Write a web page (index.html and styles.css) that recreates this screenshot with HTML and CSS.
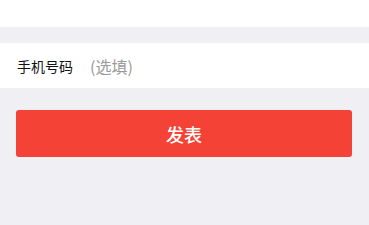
FILE: index.html
```html
<!DOCTYPE html>
<html lang="zh-CN">

<head>
    <meta charset="UTF-8">
    <meta name="viewport" content="width=device-width, initial-scale=1.0">
    <title>发表</title>
    <link rel="stylesheet" href="styles.css">
</head>

<body>
    <div class="cell top"></div>
    <div class="cell phone">
        <label class="label" for="phone">手机号码</label>
        <input class="input" id="phone" type="tel" placeholder="(选填)">
    </div>
    <div class="actions">
        <button class="submit">发表</button>
    </div>
</body>

</html>
```

FILE: styles.css
```css
* {
    margin: 0;
    padding: 0;
    box-sizing: border-box;
    font-family: "Noto Sans CJK SC", "Liberation Sans", sans-serif;
}

body {
    background: #efeff4;
    width: 369px;
    height: 225px;
    overflow: hidden;
}

.cell {
    background: #fff;
}

.top {
    height: 27px;
}

.phone {
    margin-top: 16px;
    height: 45px;
    display: flex;
    align-items: center;
    padding-left: 17px;
}

.label {
    font-size: 14px;
    color: #111;
    width: 73px;
}

.input {
    border: none;
    outline: none;
    background: none;
    font-size: 16px;
    color: #333;
    flex: 1;
}

.input::placeholder {
    color: #9a9a9a;
}

.actions {
    padding: 22px 17px 0 16px;
}

.submit {
    display: block;
    width: 100%;
    height: 47px;
    border: none;
    border-radius: 3px;
    background: #f44336;
    color: #fff;
    font-size: 18px;
    font-weight: 500;
}
```
